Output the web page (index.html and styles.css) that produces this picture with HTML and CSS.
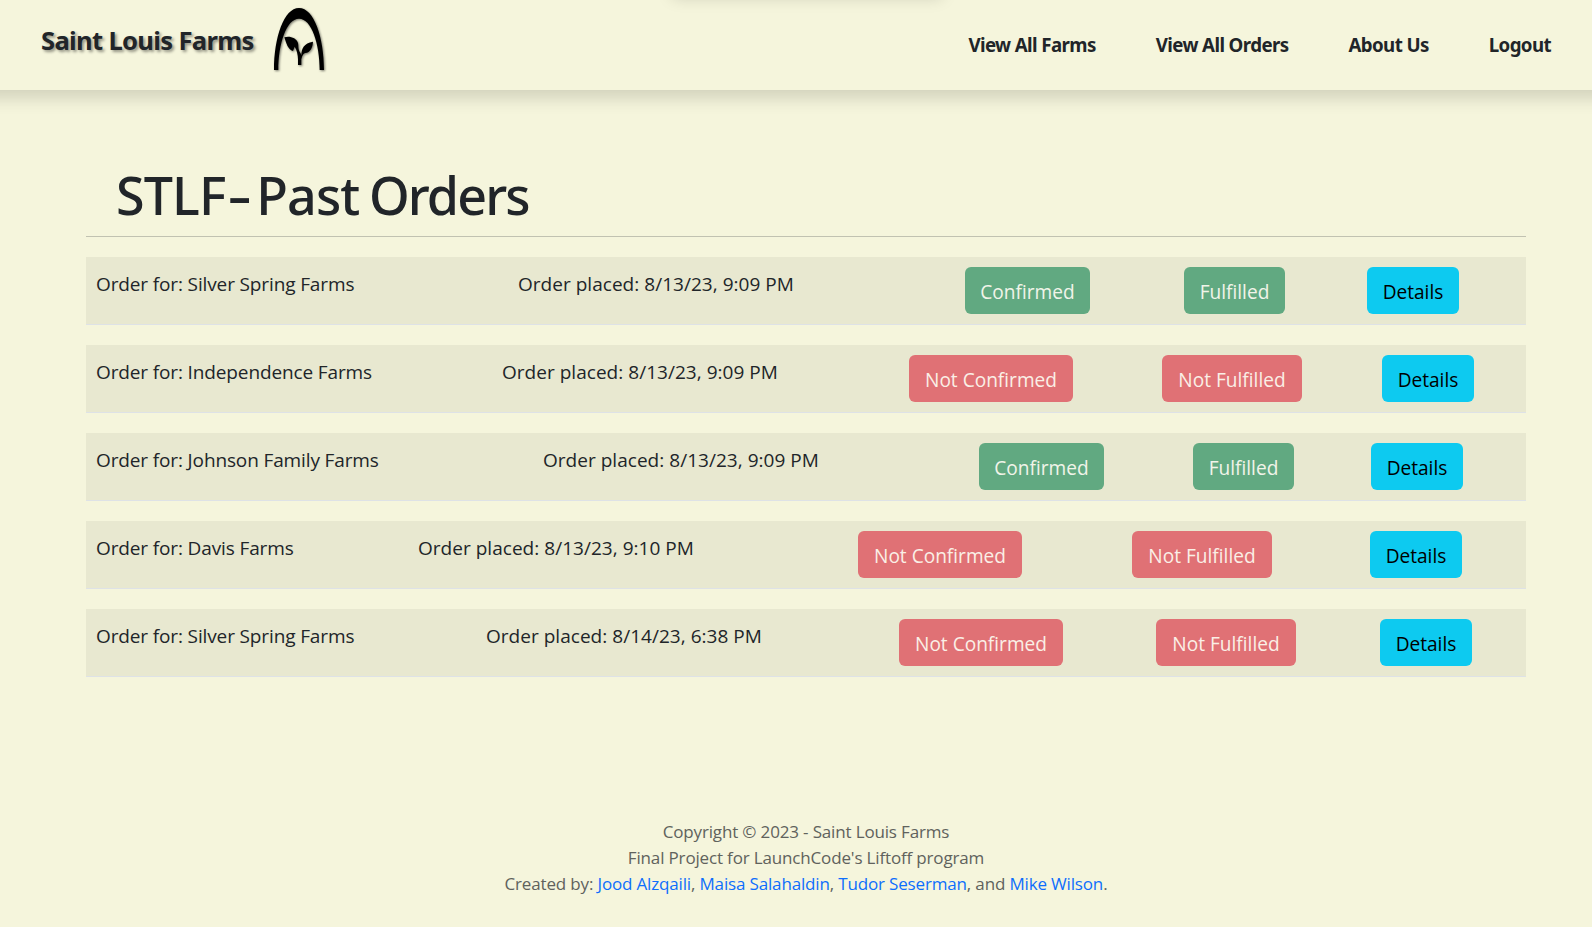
FILE: index.html
```html
<!DOCTYPE html>
<html lang="en">
<head>
<meta charset="utf-8">
<title>Saint Louis Farms</title>
<link rel="stylesheet" href="styles.css">
</head>
<body>
<div class="top-glow"></div>
<header class="site-header">
  <div class="brand">
    <span class="brand-name">Saint Louis Farms</span>
    <svg class="brand-logo" viewBox="822 24 150 186" width="50" height="62" aria-hidden="true">
      <path d="M822 210C822 112 852 24 897 24C942 24 972 112 972 210H959C959 132 935 56 897 56C859 56 835 132 835 210Z"/>
      <path d="M853 112C868 107 889 113 894 129C896 137 894 144 898 154C902 159 903 163 904 166C904 145 912 130 939 125C938 143 931 157 916 159C911 160 907 165 904 178V195H894V178C894 164 890 149 884 140L879 153C863 148 860 132 853 112Z"/>
    </svg>
  </div>
  <nav class="site-nav">
    <a>View All Farms</a>
    <a>View All Orders</a>
    <a>About Us</a>
    <a>Logout</a>
  </nav>
</header>
<main class="content">
  <h1>STLF<span class="dash">-</span>Past <span class="tight">Orders</span></h1>
  <hr>
  <section class="order cols-a">
    <p>Order for: Silver Spring Farms</p>
    <p class="placed">Order placed: 8/13/23, 9:09 PM</p>
    <button class="btn yes confirm">Confirmed</button>
    <button class="btn yes fulfil">Fulfilled</button>
    <button class="btn info">Details</button>
  </section>
  <section class="order cols-b">
    <p>Order for: Independence Farms</p>
    <p class="placed">Order placed: 8/13/23, 9:09 PM</p>
    <button class="btn no confirm">Not Confirmed</button>
    <button class="btn no fulfil">Not Fulfilled</button>
    <button class="btn info">Details</button>
  </section>
  <section class="order cols-c">
    <p>Order for: Johnson Family Farms</p>
    <p class="placed">Order placed: 8/13/23, 9:09 PM</p>
    <button class="btn yes confirm">Confirmed</button>
    <button class="btn yes fulfil">Fulfilled</button>
    <button class="btn info">Details</button>
  </section>
  <section class="order cols-d">
    <p>Order for: Davis Farms</p>
    <p class="placed">Order placed: 8/13/23, 9:10 PM</p>
    <button class="btn no confirm">Not Confirmed</button>
    <button class="btn no fulfil">Not Fulfilled</button>
    <button class="btn info">Details</button>
  </section>
  <section class="order cols-e">
    <p>Order for: Silver Spring Farms</p>
    <p class="placed">Order placed: 8/14/23, 6:38 PM</p>
    <button class="btn no confirm">Not Confirmed</button>
    <button class="btn no fulfil">Not Fulfilled</button>
    <button class="btn info">Details</button>
  </section>
</main>
<footer class="site-footer">
  <p>Copyright © 2023 - Saint Louis Farms</p>
  <p>Final Project for LaunchCode's Liftoff program</p>
  <p>Created by: <a>Jood Alzqaili</a>, <a>Maisa Salahaldin</a>, <a>Tudor Seserman</a>, and <a>Mike Wilson</a>.</p>
</footer>
</body>
</html>
```
FILE: styles.css
```css
* { box-sizing: border-box; }

body {
  margin: 0;
  height: 927px;
  display: flex;
  flex-direction: column;
  overflow: hidden;
  background: #f5f5dc;
  color: #212529;
  font-family: "Open Sans", "Noto Sans", sans-serif;
  font-size: 19px;
}

h1, p { margin: 0; }

.top-glow {
  position: absolute;
  top: -50px;
  left: 672px;
  width: 270px;
  height: 40px;
  box-shadow: 0 8px 16px rgba(0, 0, 0, .15);
}

.site-header {
  height: 90px;
  flex: none;
  display: flex;
  justify-content: space-between;
  align-items: flex-start;
  margin: 0 -30px;
  padding: 0 71px;
  font-family: "Noto Sans", sans-serif;
  font-weight: 700;
  box-shadow: 0 8px 16px rgba(0, 0, 0, .15);
}

.brand {
  display: flex;
  gap: 20px;
  padding-top: 8px;
}

.brand-name {
  font-size: 25.6px;
  line-height: 36px;
  padding-top: 15px;
  letter-spacing: -.68px;
  text-shadow: 2px 2px 3px rgba(0, 0, 0, .4);
}

.brand-logo { filter: drop-shadow(1px 1px 1px rgba(0, 0, 0, .5)); }

.site-nav {
  display: flex;
  gap: 60px;
  padding-top: 30px;
  font-size: 18.7px;
  line-height: 30px;
  letter-spacing: -.6px;
}

.content {
  margin: 67px 66px 0 86px;
}

h1 {
  padding-left: 30px;
  height: 79px;
  line-height: 76px;
  font-family: "Noto Sans", sans-serif;
  font-size: 52px;
  font-weight: 500;
  letter-spacing: -.9px;
  word-spacing: -3px;
}

.dash {
  display: inline-block;
  margin: 0 9px 0 6px;
  transform: scaleX(1.45);
}

.tight { letter-spacing: -1.9px; }

hr {
  height: 1px;
  margin: 0 0 20px;
  border: 0;
  background: #c1c2b1;
}

.order {
  display: grid;
  align-items: start;
  height: 68px;
  margin-bottom: 20px;
  padding: 10px;
  background: #e8e8d0;
  border-bottom: 1px solid #dee2e6;
  line-height: 34px;
  letter-spacing: -.13px;
  white-space: nowrap;
}

.cols-a { grid-template-columns: 421px 448px 219px 183px auto; }
.cols-b { grid-template-columns: 405px 408px 253px 220px auto; }
.cols-c { grid-template-columns: 446px 437px 214px 178px auto; }
.cols-d { grid-template-columns: 321px 441px 274px 238px auto; }
.cols-e { grid-template-columns: 389px 414px 257px 224px auto; }

.placed {
  padding-left: 1px;
  letter-spacing: .03px;
}

.btn {
  height: 47px;
  width: 92px;
  padding: 2px 0 0;
  border: 0;
  border-radius: 6px;
  font: 19.1px "Open Sans", sans-serif;
  text-align: center;
}

.yes { background: #61a981; color: #f1f4e9; }
.no { background: #e07175; color: #faefe6; }
.info { background: #0dcaf0; color: #000; }
.confirm.yes { width: 125px; }
.confirm.no { width: 164px; }
.fulfil.yes { width: 101px; }
.fulfil.no { width: 140px; }

.site-footer {
  margin: auto 66px 30px 86px;
  text-align: center;
  font-size: 17px;
  line-height: 26px;
  letter-spacing: -.16px;
  color: #60625d;
}

.site-footer a { color: #0d6efd; }
```
